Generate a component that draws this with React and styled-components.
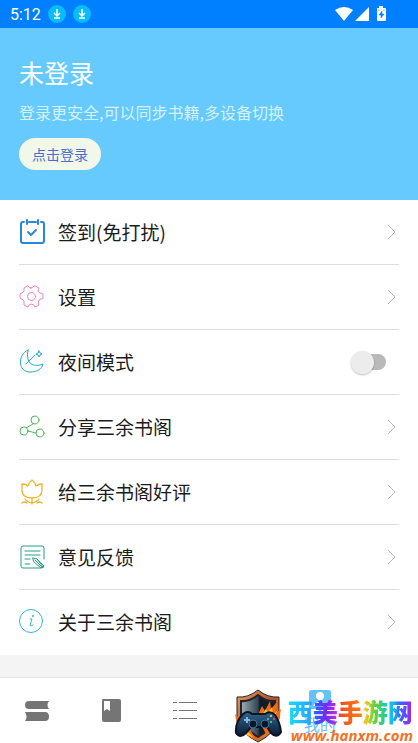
import React, { useState } from "react";
import styled, { createGlobalStyle } from "styled-components";

const GlobalStyle = createGlobalStyle`
  *, *::before, *::after { box-sizing: border-box; }
  body {
    margin: 0;
    background: #f4f4f4;
    color: #1c1c1c;
    font-family: "Noto Sans CJK SC", "Noto Sans", sans-serif;
  }
  button { font: inherit; color: inherit; border: 0; padding: 0; background: none; cursor: pointer; }
`;

const Screen = styled.div`
  min-height: 100vh;
  display: flex;
  flex-direction: column;
`;

const StatusBar = styled.div`
  display: flex;
  align-items: center;
  justify-content: space-between;
  height: 28px;
  padding: 0 29px 0 10px;
  background: #0080ff;
  color: #fff;
  font-family: Roboto, sans-serif;
  font-size: 16px;
`;

const StatusGroup = styled.div`
  display: flex;
  align-items: center;
  gap: ${(p) => p.$gap}px;
`;

const Profile = styled.header`
  display: flex;
  flex-direction: column;
  align-items: flex-start;
  padding: 26px 19px 30px;
  background: #66caff;
  color: #fff;
`;

const Title = styled.h1`
  margin: 0;
  font-size: 25px;
  line-height: 36px;
  font-weight: 400;
`;

const Subtitle = styled.p`
  margin: 10px 0 14px;
  font-size: 16px;
  line-height: 24px;
  color: #d4f1fc;
`;

const LoginButton = styled.button`
  && {
    height: 32px;
    padding: 0 13px;
    border-radius: 16px;
    background: #f1f8e9;
    color: #4c6ccb;
    font-size: 14px;
    line-height: 32px;
  }
`;

const Menu = styled.main`
  background: #fff;
  padding: 0 19px;
`;

const rowLayout = `
  display: flex;
  align-items: center;
  width: 100%;
  height: 64px;
  text-align: left;
`;

const Item = styled.div`
  border-bottom: ${(p) => (p.$last ? "0" : "1px solid #dedede")};
  height: 65px;
`;

const RowButton = styled.button`
  && { ${rowLayout} }
`;

const RowLabel = styled.label`
  ${rowLayout}
  cursor: pointer;
`;

const RowIcon = styled.svg`
  flex: none;
  width: 26px;
  height: 26px;
  margin-right: 13px;
  fill: none;
  stroke: ${(p) => p.$color};
  stroke-width: 1;
  stroke-linecap: round;
  stroke-linejoin: round;
`;

const RowText = styled.span`
  flex: 1;
  font-size: 19px;
  line-height: 28px;
`;

const Chevron = styled.svg`
  flex: none;
  width: 10px;
  height: 16px;
  margin-right: 2px;
  fill: none;
  stroke: #bdbdbd;
`;

const Switch = styled.input`
  appearance: none;
  flex: none;
  display: flex;
  align-items: center;
  width: 34px;
  height: 16px;
  margin: 0 13px 0 0;
  border-radius: 8px;
  background: ${(p) => (p.checked ? "#99d9ff" : "#b9b9b9")};
  cursor: pointer;

  &::before {
    content: "";
    width: 23px;
    height: 23px;
    flex: none;
    margin-left: ${(p) => (p.checked ? "12px" : "-1px")};
    border-radius: 50%;
    background: ${(p) => (p.checked ? "#2196f3" : "#ececec")};
    box-shadow: 0 1px 2px rgba(0, 0, 0, 0.25);
  }
`;

const TabBar = styled.nav`
  position: relative;
  display: grid;
  grid-template-columns: 3fr 3fr 3fr 8fr;
  height: 66px;
  margin-top: auto;
  border-top: 1px solid #e6e6e6;
  background: #fff;
`;

const Tab = styled.button`
  && {
    display: flex;
    flex-direction: column;
    align-items: center;
    justify-content: center;
    color: ${(p) => (p.$active ? "#66c0fa" : "#757575")};
    font-size: 16px;
    line-height: 24px;
  }
`;

const TabIcon = styled.svg`
  width: 26px;
  height: 26px;
  fill: currentColor;
`;

const Watermark = styled.div`
  position: absolute;
  right: 5px;
  bottom: 0;
  display: flex;
  align-items: flex-end;
  gap: 6px;
  pointer-events: none;
`;

const Shield = styled.svg`
  width: 48px;
  height: 54px;
`;

const Brand = styled.div`
  display: flex;
  flex-direction: column;
`;

const BrandName = styled.strong`
  font-size: 25px;
  line-height: 32px;
  font-weight: 900;
  color: transparent;
  background: linear-gradient(90deg, #18dcf8 0, #20aaff 17%, #3b55ff 23%, #7a28f0 31%, #c72be0 39%, #f4511e 43%, #fb7a14 58%, #f5c518 62%, #58d53c 70%, #18cdb0 79%, #18b8f4 84%, #3464ff 90%, #9b2be8 98%);
  background-clip: text;
  -webkit-background-clip: text;
`;

const BrandUrl = styled.span`
  margin-left: 3px;
  font: italic 700 15px/16px "Open Sans", sans-serif;
  color: #f17327;
`;

const GearPath =
  "M12 4Q14 4 15 2L16 2L20 4Q18 8 21 9Q24 9 24 11V14Q24 15 22 15Q18 16 20 21L16 23Q15 20 12 20Q10 20 9 23L5 21Q6 16 3 15Q1 15 1 13V11Q1 9 3 9Q6 8 5 4L8 2L9 2Q10 4 12 4Z";

const items = [
  {
    label: "签到(免打扰)", color: "#2787df",
    art: <g strokeWidth="2"><path d="M5 3H4Q2 3 2 5V22Q2 24 4 24H23Q25 24 25 22V5Q25 3 23 3H22M10 3H17M8 1V5M19 1V5" /><path d="M9 13L12 16L17 11" /></g>,
  },
  { label: "设置", color: "#ee82bd", art: <><path d={GearPath} /><circle cx="12.5" cy="12.500" r="4" /></> },
  {
    label: "夜间模式", color: "#20acc8", toggle: true,
    art: <><path d="M9 1C-2 6 -1 23 11 23C18 23 23 20 24 15C17 18 10 16 9 10Q8 5 9 1Z" /><path d="M7 15L16 6M20 2L21 4L23 5L21 6L20 8L19 6L17 5L19 4Z" /></>,
  },
  {
    label: "分享三余书阁", color: "#50b45a",
    art: <><circle cx="16" cy="6" r="4" /><circle cx="5" cy="17" r="4" /><circle cx="21" cy="19" r="4" /><path d="M14 10L7 14M9 17L17 19" /></>,
  },
  {
    label: "给三余书阁好评", color: "#eeb32b",
    art: <g strokeWidth="1.3"><path d="M3 5Q7 5 9 7Q10 3 13 1Q16 3 17 7Q20 5 23 5V11Q23 19 13 19Q3 19 3 11ZM13 19V25M13 24Q8 23 6 20M13 24Q18 23 20 20M3 24Q5 22 8 24M23 24Q21 22 18 24" /></g>,
  },
  {
    label: "意见反馈", color: "#279d8b",
    art: <><path d="M25 15V4Q25 2 23 2H4Q2 2 2 4V22Q2 24 4 24H22Q25 24 25 22M6 7H21M6 11H21M6 15H11M6 20H11" /><path d="M14 14L18 15L25 22L22 24L15 18ZM16 16L23 23M18 15L24 23" /></>,
  },
  {
    label: "关于三余书阁", color: "#36b1e8",
    art: <><circle cx="12" cy="12" r="11.500" /><path d="M11 10H13L11 16Q11 18 14 16" /><circle cx="14" cy="7" r="1" fill="#36b1e8" stroke="none" /></>,
  },
];

const DownloadBadge = () => (
  <svg width="18" height="18" viewBox="0 0 18 18" aria-hidden="true">
    <circle cx="9" cy="9" r="9" fill="#08bdf8" />
    <path d="M9 4V10M6 8L9 11L12 8M6 13H12" fill="none" stroke="#fff" strokeWidth="1.5" />
  </svg>
);

function MenuItem({ item, last, night, onNight }) {
  const icon = <RowIcon $color={item.color} viewBox="0 0 26 26" aria-hidden="true">{item.art}</RowIcon>;
  return (
    <Item $last={last}>
      {item.toggle ? (
        <RowLabel>
          {icon}<RowText>{item.label}</RowText>
          <Switch type="checkbox" role="switch" checked={night} onChange={onNight} />
        </RowLabel>
      ) : (
        <RowButton type="button">
          {icon}<RowText>{item.label}</RowText>
          <Chevron viewBox="0 0 10 16" aria-hidden="true"><path d="M1 1L8 8L1 15" /></Chevron>
        </RowButton>
      )}
    </Item>
  );
}

export default function App() {
  const [night, setNight] = useState(false);
  return (
    <Screen>
      <GlobalStyle />
      <StatusBar>
        <StatusGroup $gap={7}>
          <time>5:12</time>
          <DownloadBadge />
          <DownloadBadge />
        </StatusGroup>
        <StatusGroup $gap={2}>
          <svg width="18" height="16" viewBox="0 0 18 16" fill="#fff"><path d="M0 4Q9-2 18 4L9 15Z" /></svg>
          <svg width="14" height="16" viewBox="0 0 14 16" fill="#fff"><path d="M14 1V15H0Z" /></svg>
          <svg width="18" height="16" viewBox="0 0 18 16"><path d="M6 2H8V0H12V2H14Q15 2 15 3V14Q15 15 14 15H7Q6 15 6 14V3Q6 2 6 2Z" fill="#fff" /><path d="M11 5L8 9H10V12L13 8H11ZM7 4H9M12 4H14" fill="#0080ff" stroke="#0080ff" strokeWidth=".5" /></svg>
        </StatusGroup>
      </StatusBar>
      <Profile>
        <Title>未登录</Title>
        <Subtitle>登录更安全,可以同步书籍,多设备切换</Subtitle>
        <LoginButton type="button">点击登录</LoginButton>
      </Profile>
      <Menu>
        {items.map((item, i) => (
          <MenuItem key={item.label} item={item} last={i === items.length - 1} night={night} onNight={(e) => setNight(e.target.checked)} />
        ))}
      </Menu>
      <TabBar>
        <Tab type="button" aria-label="书架">
          <TabIcon viewBox="0 0 26 26"><path d="M5 3H25Q22 7 25 11H5Q1 11 1 7Q1 3 5 3ZM1 14H21Q25 14 25 18.500Q25 23 21 23H1Q4 18.500 1 14Z" /></TabIcon>
        </Tab>
        <Tab type="button" aria-label="书籍">
          <TabIcon viewBox="0 0 26 26"><path fillRule="evenodd" d="M5 1H21Q23 1 23 3V22Q23 24 21 24H6Q4 24 4 22V3Q4 1 5 1ZM6 3V13L9 11L12 13V3Z" /></TabIcon>
        </Tab>
        <Tab type="button" aria-label="分类">
          <TabIcon viewBox="0 0 26 26"><path d="M2 4H6V5H2ZM8 4H26V5H8ZM2 12H6V13H2ZM8 12H26V13H8ZM2 20H6V21H2ZM8 20H26V21H8Z" /></TabIcon>
        </Tab>
        <Tab type="button" $active aria-current="page">
          <TabIcon viewBox="0 0 26 26"><path fillRule="evenodd" d="M5 4H21Q24 4 24 6V21Q24 23 21 23H16L13 26L10 23H5Q2 23 2 21V6Q2 4 5 4ZM13 6A4 4 0 1 0 13 14A4 4 0 1 0 13 6ZM6 20H20Q18 16 13 16Q8 16 6 20Z" /></TabIcon>
          我的
        </Tab>
        <Watermark>
          <Shield viewBox="0 0 48 54">
            <defs>
              <linearGradient id="rim" x1="0" y1="0" x2="1" y2="1"><stop stopColor="#e7a35b" /><stop offset=".5" stopColor="#af522c" /><stop offset="1" stopColor="#ff951f" /></linearGradient>
              <linearGradient id="metal"><stop stopColor="#9eafb6" /><stop offset=".5" stopColor="#314653" /><stop offset=".55" stopColor="#101c27" /></linearGradient>
              <linearGradient id="pad" x2="0" y2="1"><stop stopColor="#31658d" /><stop offset="1" stopColor="#0a1c34" /></linearGradient>
            </defs>
            <path d="M24 1Q34 9 45 8V29Q42 44 24 53Q6 44 3 29V8Q14 9 24 1Z" fill="url(#rim)" stroke="#25252d" />
            <path d="M24 6Q33 13 41 12V29Q38 40 24 48Q10 40 7 29V12Q16 13 24 6Z" fill="url(#metal)" stroke="#27222a" strokeWidth="2" />
            <path d="M23 28L28 17L31 22L36 12L37 20L43 13L42 24L47 20L44 39L32 45ZM8 32L1 25L4 41L23 52L15 39Z" fill="#f36a13" />
            <path d="M27 27L32 20L34 24L38 18L39 26L43 22L39 33ZM8 37L4 35L9 44L20 49Z" fill="#ffc43d" />
            <path d="M9 25Q14 21 18 25H31Q36 21 41 26Q46 33 47 43Q43 50 37 44L33 38H17L12 44Q6 50 2 44Q1 33 9 25Z" fill="url(#pad)" stroke="#081625" strokeWidth="2" />
            <circle cx="19" cy="35" r="4" fill="#0b1724" stroke="#47769b" /><circle cx="31" cy="35" r="4" fill="#0b1724" stroke="#47769b" />
            <path d="M10 31H16M13 28V34" stroke="#86bad3" strokeWidth="2" />
            <circle cx="37" cy="27" r="1" fill="#ffdc3d" /><circle cx="40" cy="30" r="1" fill="#ff493a" /><circle cx="34" cy="30" r="1" fill="#37c8ff" /><circle cx="37" cy="33" r="1" fill="#5fe17b" />
          </Shield>
          <Brand>
            <BrandName>西美手游网</BrandName>
            <BrandUrl>www.hanxm.com</BrandUrl>
          </Brand>
        </Watermark>
      </TabBar>
    </Screen>
  );
}
